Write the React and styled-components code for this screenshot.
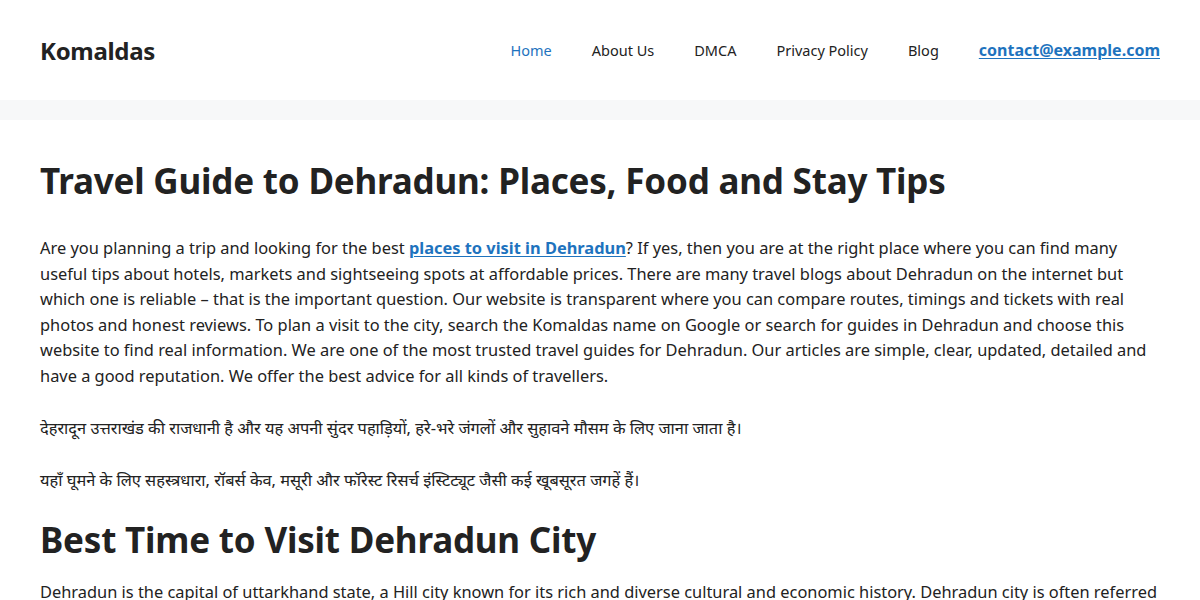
import React from 'react';
import styled, {createGlobalStyle} from 'styled-components';

const GlobalStyle = createGlobalStyle`
  body {
    margin: 0;
    background-color: #f7f8f9;
    color: #222222;
    font-family: "Noto Sans", "Open Sans", sans-serif;
  }
  * {
    box-sizing: border-box;
  }
`;

const navItems = ['Home', 'About Us', 'DMCA', 'Privacy Policy', 'Blog'];

const Header = styled.header`
  background-color: #ffffff;
  height: 100px;
  padding: 0 40px;
  display: flex;
  align-items: center;
  justify-content: space-between;
`;

const Logo = styled.a`
  font-size: 24px;
  font-weight: 700;
  color: #222222;
  text-decoration: none;
  letter-spacing: -0.3px;
`;

const Nav = styled.nav`
  display: flex;
  align-items: center;
`;

const NavLink = styled.a`
  font-size: 14.5px;
  padding: 0 20px;
  line-height: 60px;
  color: ${props => (props.$active ? '#1e73be' : '#222222')};
  text-decoration: none;
`;

const MailLink = styled.a`
  font-size: 16px;
  font-weight: 700;
  padding: 0 0 0 20px;
  color: #1e73be;
  text-decoration: underline;
  text-underline-offset: 2px;
`;

const Content = styled.main`
  background-color: #ffffff;
  margin-top: 20px;
  padding: 40px;
  min-height: 500px;
`;

const Title = styled.h1`
  font-size: 35px;
  font-weight: 700;
  line-height: 1.2;
  margin: 0 0 33px;
  letter-spacing: -0.2px;
`;

const Heading = styled.h2`
  font-size: 35px;
  font-weight: 700;
  line-height: 1.2;
  margin: 0 0 18px;
  letter-spacing: -0.2px;
`;

const Para = styled.p`
  font-size: 16.4px;
  line-height: 1.56;
  margin: 0 0 26px;
`;

const HindiPara = styled(Para)`
  font-size: 16.4px;
  line-height: 26px;
`;

const InlineLink = styled.a`
  color: #1e73be;
  font-weight: 700;
  text-decoration: underline;
  text-underline-offset: 2px;
`;

function App() {
  return (
    <>
      <GlobalStyle />
      <Header>
        <Logo href="#">Komaldas</Logo>
        <Nav>
          {navItems.map((item, i) => (
            <NavLink key={item} href="#" $active={i === 0}>{item}</NavLink>
          ))}
          <MailLink href="#">contact@example.com</MailLink>
        </Nav>
      </Header>
      <Content>
        <Title>Travel Guide to Dehradun: Places, Food and Stay Tips</Title>
        <Para>
          Are you planning a trip and looking for the best <InlineLink href="#">places to visit in Dehradun</InlineLink>? If yes, then you are at the right place where you can find many useful tips about hotels, markets and sightseeing spots at affordable prices. There are many travel blogs about Dehradun on the internet but which one is reliable – that is the important question. Our website is transparent where you can compare routes, timings and tickets with real photos and honest reviews. To plan a visit to the city, search the Komaldas name on Google or search for guides in Dehradun and choose this website to find real information. We are one of the most trusted travel guides for Dehradun. Our articles are simple, clear, updated, detailed and have a good reputation. We offer the best advice for all kinds of travellers.
        </Para>
        <HindiPara>
          देहरादून उत्तराखंड की राजधानी है और यह अपनी सुंदर पहाड़ियों, हरे-भरे जंगलों और सुहावने मौसम के लिए जाना जाता है।
        </HindiPara>
        <HindiPara>
          यहाँ घूमने के लिए सहस्त्रधारा, रॉबर्स केव, मसूरी और फॉरेस्ट रिसर्च इंस्टिट्यूट जैसी कई खूबसूरत जगहें हैं।
        </HindiPara>
        <Heading>Best Time to Visit Dehradun City</Heading>
        <Para>
          Dehradun is the capital of uttarkhand state, a Hill city known for its rich and diverse cultural and economic history. Dehradun city is often referred to as the gateway to the hills, and it is loved by visitors from every part of the country.
        </Para>
      </Content>
    </>
  );
}

export default App;
